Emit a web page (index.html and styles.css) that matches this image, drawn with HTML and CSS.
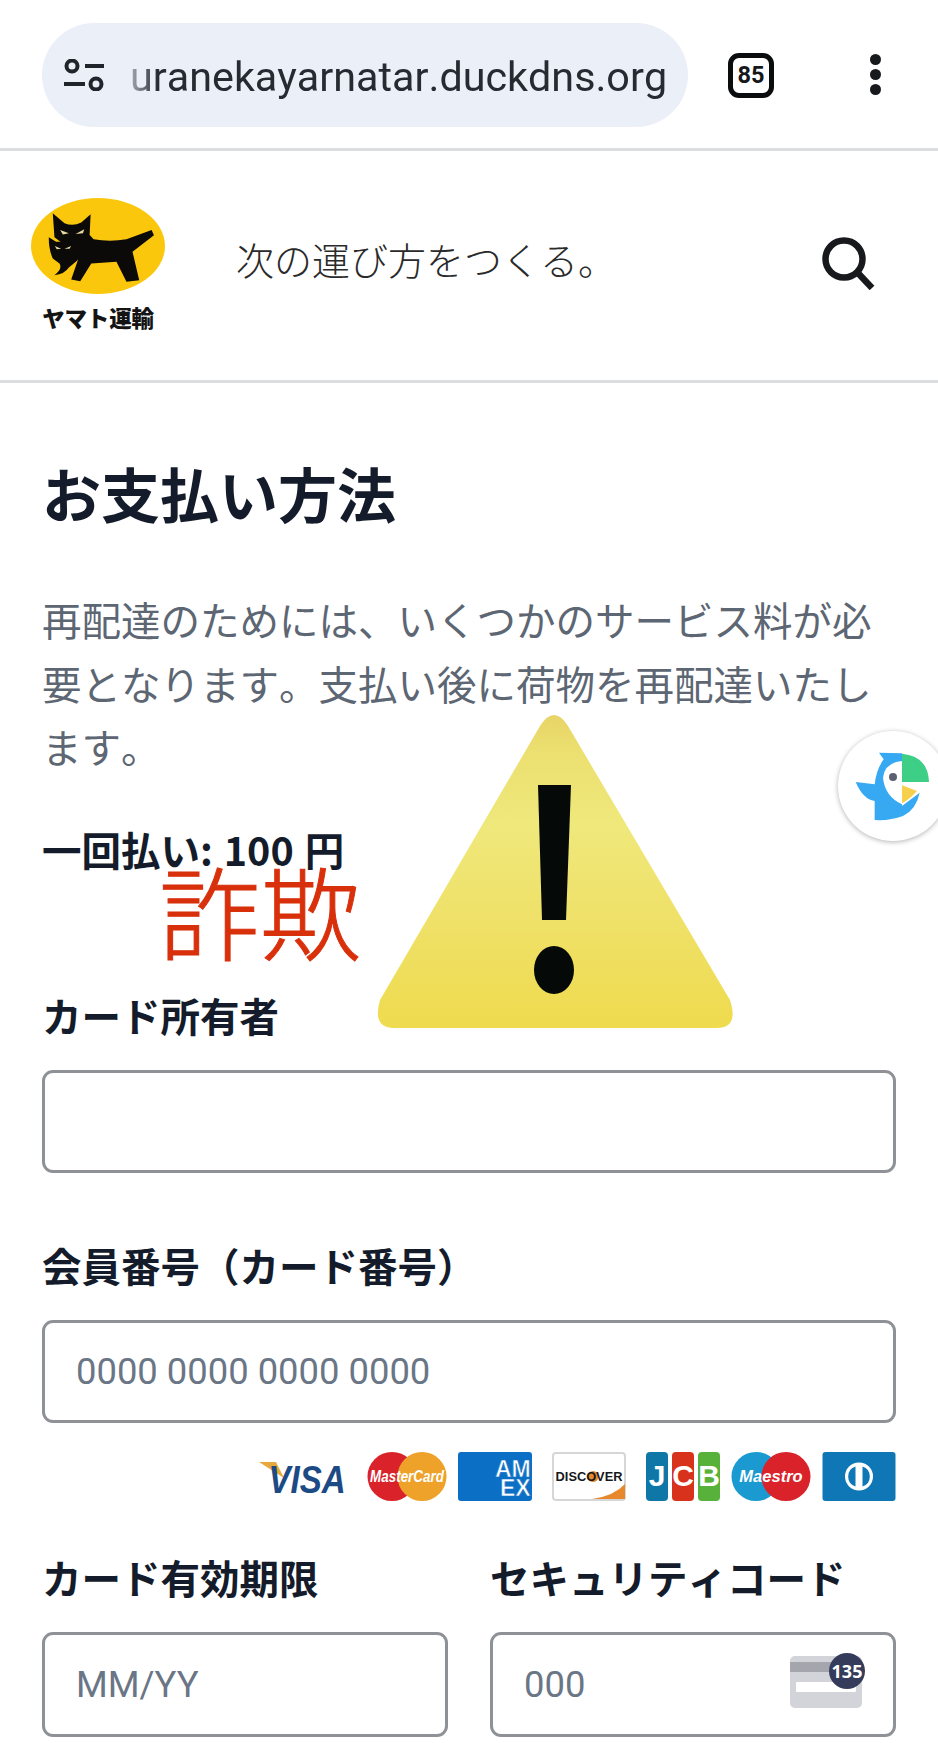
FILE: index.html
```html
<!DOCTYPE html>
<html lang="ja">
<head>
<meta charset="utf-8">
<title>お支払い方法</title>
<link rel="stylesheet" href="styles.css">
</head>
<body>
<div class="page">
  <div class="browser-bar">
    <div class="url-pill">
      <svg class="tune" viewBox="0 0 40 32"><circle cx="8" cy="7" r="5.5"/><circle cx="32" cy="25" r="5.5"/><path d="M21 7h19M0 25h21"/></svg>
      <span class="url-text">uranekayarnatar.duckdns.org</span>
    </div>
    <div class="tab-count">85</div>
    <div class="menu-dots"><i></i><i></i><i></i></div>
  </div>

  <header class="site-header">
    <div class="brand">
      <svg class="cat" viewBox="65 55 400 286">
        <ellipse cx="265" cy="198" rx="200" ry="143" fill="#fbc70d"/>
        <path d="M130 100L165 130Q190 140 215 128L243 103L240 165L252 178Q300 186 350 178L425 150L432 166L368 215L388 300L350 305L320 245L245 250L212 303L185 298L205 240L185 210L135 172Z" fill="#0b0a08"/>
        <path d="M118 172L140 185L185 185L205 240L178 262Q165 282 135 285Q160 265 150 250L130 235Q118 210 118 172Z" fill="#0b0a08"/>
        <path d="M152 150L178 160L160 164ZM198 162L224 148L220 160ZM136 198L155 206L142 208ZM165 206L185 198L180 206Z" fill="#e8d9a0"/>
      </svg>
      <span class="brand-name">ヤマト運輸</span>
    </div>
    <div class="tagline">次の運び方をつくる。</div>
    <svg class="search" viewBox="0 0 54 54"><circle cx="23" cy="23" r="18.5"/><path d="M36 36L51 52"/></svg>
  </header>

  <main class="content">
    <h1 class="title">お支払い方法</h1>
    <p class="lead">再配達のためには、いくつかのサービス料が必要となります。支払い後に荷物を再配達いたします。</p>
    <p class="price">一回払い: 100 円</p>

    <div class="field field-name">
      <label class="label">カード所有者</label>
      <input class="input" type="text">
    </div>

    <div class="field field-number">
      <label class="label">会員番号（カード番号）</label>
      <input class="input" type="text" placeholder="0000 0000 0000 0000">
    </div>

    <div class="card-logos">
      <svg class="logo logo-visa" viewBox="0 0 88 49">
        <path d="M0 10h17l8 16z" fill="#e7a93b"/>
        <text transform="translate(48 41) scale(.87 1)" text-anchor="middle" class="t-visa">VISA</text>
      </svg>
      <svg class="logo logo-round wide-gap" viewBox="0 0 80 49">
        <circle cx="25" cy="24.500" r="24.500" fill="#d9222a"/>
        <circle cx="55" cy="24.500" r="24.500" fill="#eea229"/>
        <text transform="translate(40 30) scale(.84 1)" text-anchor="middle" class="t-mc">MasterCard</text>
      </svg>
      <svg class="logo logo-card" viewBox="0 0 74 49">
        <rect width="74" height="49" rx="3" fill="#0b70c5"/>
        <text x="37" y="25" class="t-amex">AM</text>
        <text x="42" y="44" class="t-amex">EX</text>
      </svg>
      <svg class="logo logo-card wide-gap" viewBox="0 0 74 49">
        <rect x="1" y="1" width="72" height="47" rx="3" fill="#fff" stroke="#d4d6d8" stroke-width="2"/>
        <path d="M40 47L73 47V32Q62 44 40 47Z" fill="#e8882d"/>
        <circle cx="41" cy="24.500" r="5.500" fill="#e8882d"/>
        <text x="37" y="29" text-anchor="middle" class="t-disc">DISCOVER</text>
      </svg>
      <svg class="logo logo-card wide-gap" viewBox="0 0 74 49">
        <rect width="22" height="49" rx="4" fill="#0f77a8"/>
        <rect x="26" width="22" height="49" rx="4" fill="#d8321c"/>
        <rect x="52" width="22" height="49" rx="4" fill="#57b13b"/>
        <text x="11" y="34" text-anchor="middle" class="t-jcb">J</text>
        <text x="37" y="34" text-anchor="middle" class="t-jcb">C</text>
        <text x="63" y="34" text-anchor="middle" class="t-jcb">B</text>
      </svg>
      <svg class="logo logo-round" viewBox="0 0 80 49">
        <circle cx="25" cy="24.500" r="24.500" fill="#1a9ad1"/>
        <circle cx="55" cy="24.500" r="24.500" fill="#d9222a"/>
        <text x="40" y="30" text-anchor="middle" class="t-maestro">Maestro</text>
      </svg>
      <svg class="logo logo-card" viewBox="0 0 73 49">
        <rect width="73" height="49" rx="3" fill="#0f77b5"/>
        <circle cx="36.500" cy="24.500" r="14" fill="#fff"/>
        <path d="M33 14.500a10.500 10.500 0 0 0 0 20zM40 14.500a10.500 10.500 0 0 1 0 20z" fill="#0f77b5"/>
      </svg>
    </div>

    <div class="pay-row">
      <div class="field">
        <label class="label">カード有効期限</label>
        <input class="input" type="text" placeholder="MM/YY">
      </div>
      <div class="field">
        <label class="label">セキュリティコード</label>
        <div class="cvc-wrap">
          <input class="input" type="text" placeholder="000">
          <svg class="cvc-icon" viewBox="0 0 90 54">
            <rect y="2" width="72" height="52" rx="5" fill="#d3d4d9"/>
            <rect y="8" width="72" height="10" fill="#a4a5ad"/>
            <rect x="6" y="28" width="60" height="10" rx="1" fill="#fff"/>
            <circle cx="57" cy="17" r="18" fill="#353b5a"/>
            <text x="57" y="23.500" text-anchor="middle" class="t-cvc">135</text>
          </svg>
        </div>
      </div>
    </div>
  </main>

  <div class="scam-word">詐欺</div>

  <svg class="warning" viewBox="0 0 357 318">
    <defs>
      <linearGradient id="warn" x1="0" y1="0" x2="0" y2="1">
        <stop offset="0" stop-color="#e8d466"/>
        <stop offset="0.12" stop-color="#ebe070"/>
        <stop offset="0.35" stop-color="#efe87b"/>
        <stop offset="0.65" stop-color="#efe169"/>
        <stop offset="1" stop-color="#efdb4e"/>
      </linearGradient>
    </defs>
    <path d="M163 14Q177 -8 191 14L353 288Q362 316 340 316L17 316Q-5 316 3 288Z" fill="url(#warn)"/>
    <path d="M161 73H194L189 208H165Z" fill="#050a08"/>
    <ellipse cx="177" cy="258" rx="20" ry="24" fill="#050a08"/>
  </svg>

  <div class="float-bubble">
    <svg class="bird" viewBox="55 65 330 330">
      <path d="M178 130L247 132V290L300 250Q290 300 250 320Q210 335 165 332V275Q130 270 108 218L165 225Q170 180 192 150Z" fill="#37a9f2"/>
      <path d="M247 155Q195 160 190 205Q195 260 247 285Z" fill="#fff"/>
      <path d="M247 133Q325 140 328 218H247Z" fill="#3ccf85"/>
      <path d="M247 228L292 245Q270 270 247 282Z" fill="#f6cf4c"/>
      <circle cx="220" cy="203" r="12" fill="#5c5f70"/>
    </svg>
  </div>
</div>
</body>
</html>
```

FILE: styles.css
```css
* { box-sizing: border-box; }
html, body { margin: 0; padding: 0; background: #fff; }
body {
  font-family: "Noto Sans CJK JP", "Noto Sans", sans-serif;
  font-kerning: none;
  color: #141c2b;
}
.page { position: relative; width: 938px; height: 1743px; overflow: hidden; }

.browser-bar {
  height: 151px;
  padding: 23px 0 0 42px;
  display: flex;
  align-items: flex-start;
  border-bottom: 3px solid #dcdddf;
}
.url-pill {
  width: 646px;
  height: 104px;
  border-radius: 52px;
  background: #ebeff8;
  display: flex;
  align-items: center;
  padding-left: 22px;
}
.tune { width: 40px; height: 32px; flex: none; fill: none; stroke: #20242b; stroke-width: 4; }
.url-text {
  margin: 3px 0 0 26px;
  font-family: Roboto, sans-serif;
  font-size: 41.300px;
  color: #262a31;
  white-space: nowrap;
  -webkit-mask-image: linear-gradient(90deg, rgba(0,0,0,.35), #000 28px);
  mask-image: linear-gradient(90deg, rgba(0,0,0,.35), #000 28px);
}
.tab-count {
  margin: 30px 0 0 40px;
  width: 46px;
  height: 45px;
  border: 5px solid #0b0c0e;
  border-radius: 11px;
  font-family: Roboto, sans-serif;
  font-weight: 700;
  font-size: 23.500px;
  line-height: 35px;
  text-align: center;
  color: #15171a;
}
.menu-dots {
  margin: 31px 0 0 96px;
  display: flex;
  flex-direction: column;
  gap: 4px;
}
.menu-dots i { display: block; width: 11px; height: 11px; border-radius: 50%; background: #17191c; }

.site-header {
  height: 232px;
  display: flex;
  align-items: flex-start;
  border-bottom: 3px solid #dcdddf;
  padding: 47px 0 0 30px;
}
.brand { width: 136px; display: flex; flex-direction: column; align-items: center; flex: none; }
.cat { width: 134px; height: 96px; display: block; }
.brand-name {
  margin-top: 8px;
  font-size: 22.500px;
  line-height: 30px;
  font-weight: 900;
  color: #141414;
  white-space: nowrap;
  letter-spacing: -.2px;
}
.tagline {
  margin: 34px 0 0 70px;
  font-size: 38px;
  line-height: 54px;
  font-weight: 300;
  color: #2a2a2a;
  white-space: nowrap;
}
.search { width: 54px; height: 54px; margin: 38px 0 0 205px; flex: none; fill: none; stroke: #17191c; stroke-width: 6.500; }

.content { padding: 0 42px; }
.title {
  margin: 0;
  padding-top: 65px;
  font-size: 59px;
  line-height: 90px;
  font-weight: 700;
  color: #141c2b;
  white-space: nowrap;
}
.lead {
  margin: 49px 0 0;
  width: 840px;
  font-size: 39.500px;
  line-height: 63.500px;
  color: #5d6673;
}
.price {
  margin: 41px 0 0;
  font-size: 39.500px;
  line-height: 60px;
  font-weight: 700;
  word-spacing: 2px;
}
.label {
  display: block;
  font-size: 39.500px;
  line-height: 58px;
  font-weight: 700;
  white-space: nowrap;
}
.field-name { margin-top: 107px; }
.field-number { margin-top: 63px; }
.input {
  display: block;
  width: 100%;
  height: 103px;
  margin-top: 26px;
  padding: 0 31px;
  border: 3px solid #8e9195;
  border-radius: 11px;
  background: #fff;
  font-family: Roboto, "Noto Sans", sans-serif;
  font-size: 36.400px;
}
.input::placeholder { color: #6a7686; opacity: 1; }
.card-logos {
  margin-top: 29px;
  height: 49px;
  display: flex;
  justify-content: flex-end;
  gap: 11px;
}
.logo { height: 49px; display: block; flex: none; }
.wide-gap { margin-left: 9px; }
.logo-visa { width: 88px; }
.logo-round { width: 80px; }
.logo-card { width: 74px; }
.t-visa { font: italic 700 38px "Liberation Sans", sans-serif; fill: #1c4a85; }
.t-mc { font: italic 700 16px "Liberation Sans", sans-serif; fill: #fff; }
.t-amex { font: 700 23px "Liberation Sans", sans-serif; fill: #fff; stroke: #0b70c5; stroke-width: .6; }
.t-disc { font: 700 12.800px "Liberation Sans", sans-serif; fill: #16181b; }
.t-jcb { font: 700 30px "Liberation Sans", sans-serif; fill: #fff; }
.t-maestro { font: italic 700 16.500px "Liberation Sans", sans-serif; fill: #fff; }
.t-cvc { font: 700 18px "Open Sans", sans-serif; fill: #fff; }
.pay-row {
  margin-top: 47px;
  display: grid;
  grid-template-columns: 406px 406px;
  gap: 42px;
}
.pay-row .input { height: 105px; }
.cvc-wrap { position: relative; }
.cvc-icon { position: absolute; right: 16px; top: 22px; width: 90px; height: 54px; overflow: visible; }

.scam-word {
  position: absolute;
  left: 159px;
  top: 838px;
  font-size: 101px;
  line-height: 142px;
  font-weight: 300;
  -webkit-text-stroke: 1px #d9300c;
  color: #d9300c;
  white-space: nowrap;
}
.warning { position: absolute; left: 377px; top: 712px; width: 357px; height: 318px; overflow: visible; }
.float-bubble {
  position: absolute;
  left: 838px;
  top: 731px;
  width: 110px;
  height: 110px;
  border-radius: 50%;
  background: #fff;
  box-shadow: 0 1px 5px rgba(0,0,0,.3);
}
.bird { display: block; width: 110px; height: 110px; }
```
